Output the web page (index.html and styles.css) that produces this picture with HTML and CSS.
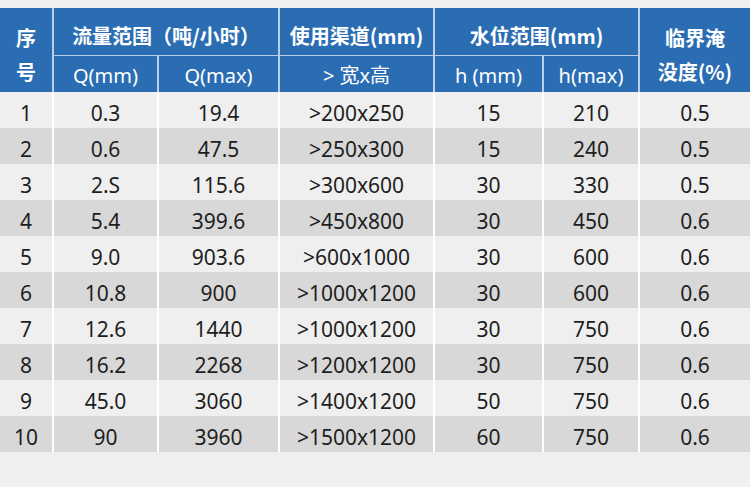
FILE: index.html
```html
<!DOCTYPE html>
<html lang="zh">
<head>
<meta charset="utf-8">
<link rel="stylesheet" href="styles.css">
</head>
<body>
<table class="spec">
  <colgroup>
    <col class="c1"><col class="c2"><col class="c3"><col class="c4"><col class="c5"><col class="c6"><col class="c7">
  </colgroup>
  <thead>
    <tr class="h1">
      <th rowspan="2" class="zh tall first">序<br>号</th>
      <th colspan="2" class="zh split">流量范围（吨/小时）</th>
      <th class="zh split">使用渠道(mm)</th>
      <th colspan="2" class="zh split">水位范围(mm)</th>
      <th rowspan="2" class="zh tall">临界淹<br>没度(%)</th>
    </tr>
    <tr class="h2">
      <th>Q(mm)</th>
      <th>Q(max)</th>
      <th>&gt; 宽x高</th>
      <th>h (mm)</th>
      <th>h(max)</th>
    </tr>
  </thead>
  <tbody>
    <tr><td>1</td><td>0.3</td><td>19.4</td><td>&gt;200x250</td><td>15</td><td>210</td><td>0.5</td></tr>
    <tr><td>2</td><td>0.6</td><td>47.5</td><td>&gt;250x300</td><td>15</td><td>240</td><td>0.5</td></tr>
    <tr><td>3</td><td>2.S</td><td>115.6</td><td>&gt;300x600</td><td>30</td><td>330</td><td>0.5</td></tr>
    <tr><td>4</td><td>5.4</td><td>399.6</td><td>&gt;450x800</td><td>30</td><td>450</td><td>0.6</td></tr>
    <tr><td>5</td><td>9.0</td><td>903.6</td><td>&gt;600x1000</td><td>30</td><td>600</td><td>0.6</td></tr>
    <tr><td>6</td><td>10.8</td><td>900</td><td>&gt;1000x1200</td><td>30</td><td>600</td><td>0.6</td></tr>
    <tr><td>7</td><td>12.6</td><td>1440</td><td>&gt;1000x1200</td><td>30</td><td>750</td><td>0.6</td></tr>
    <tr><td>8</td><td>16.2</td><td>2268</td><td>&gt;1200x1200</td><td>30</td><td>750</td><td>0.6</td></tr>
    <tr><td>9</td><td>45.0</td><td>3060</td><td>&gt;1400x1200</td><td>50</td><td>750</td><td>0.6</td></tr>
    <tr><td>10</td><td>90</td><td>3960</td><td>&gt;1500x1200</td><td>60</td><td>750</td><td>0.6</td></tr>
  </tbody>
</table>
</body>
</html>
```
FILE: styles.css
```css
html, body {
  margin: 0;
  padding: 0;
  background: #f0f0f0;
}
body {
  padding-top: 8px;
  font-family: "Noto Sans", "Noto Sans CJK SC", sans-serif;
}
.spec {
  width: 750px;
  table-layout: fixed;
  border-collapse: separate;
  border-spacing: 0;
}
.c1 { width: 52px; }
.c2 { width: 105px; }
.c3 { width: 121px; }
.c4 { width: 155px; }
.c5 { width: 109px; }
.c6 { width: 96px; }
.c7 { width: 112px; }

th {
  background: #2b6db3;
  color: #ffffff;
  font-weight: normal;
  font-size: 20px;
  padding: 0;
  text-align: center;
  border-left: 2px solid #b9cfe8;
  line-height: 1;
}
th.first { border-left: none; }
th.zh {
  font-family: "Noto Sans CJK SC", sans-serif;
  font-weight: 700;
  font-size: 20px;
}
.h1 th.split {
  height: 38px;
  padding-top: 9px;
  border-bottom: 1px solid #b9cfe8;
}
.h2 th {
  height: 33px;
  padding-top: 3px;
}
th.tall {
  line-height: 34px;
  padding-top: 10px;
}

td {
  height: 30px;
  padding: 6px 0 0;
  text-align: center;
  font-size: 21px;
  line-height: 1;
  color: #1e1e1e;
  border-left: 2px solid #ffffff;
  background: #efefef;
}
td:first-child { border-left: none; }
tbody tr:nth-child(even) td { background: #d8d8d8; }
```
